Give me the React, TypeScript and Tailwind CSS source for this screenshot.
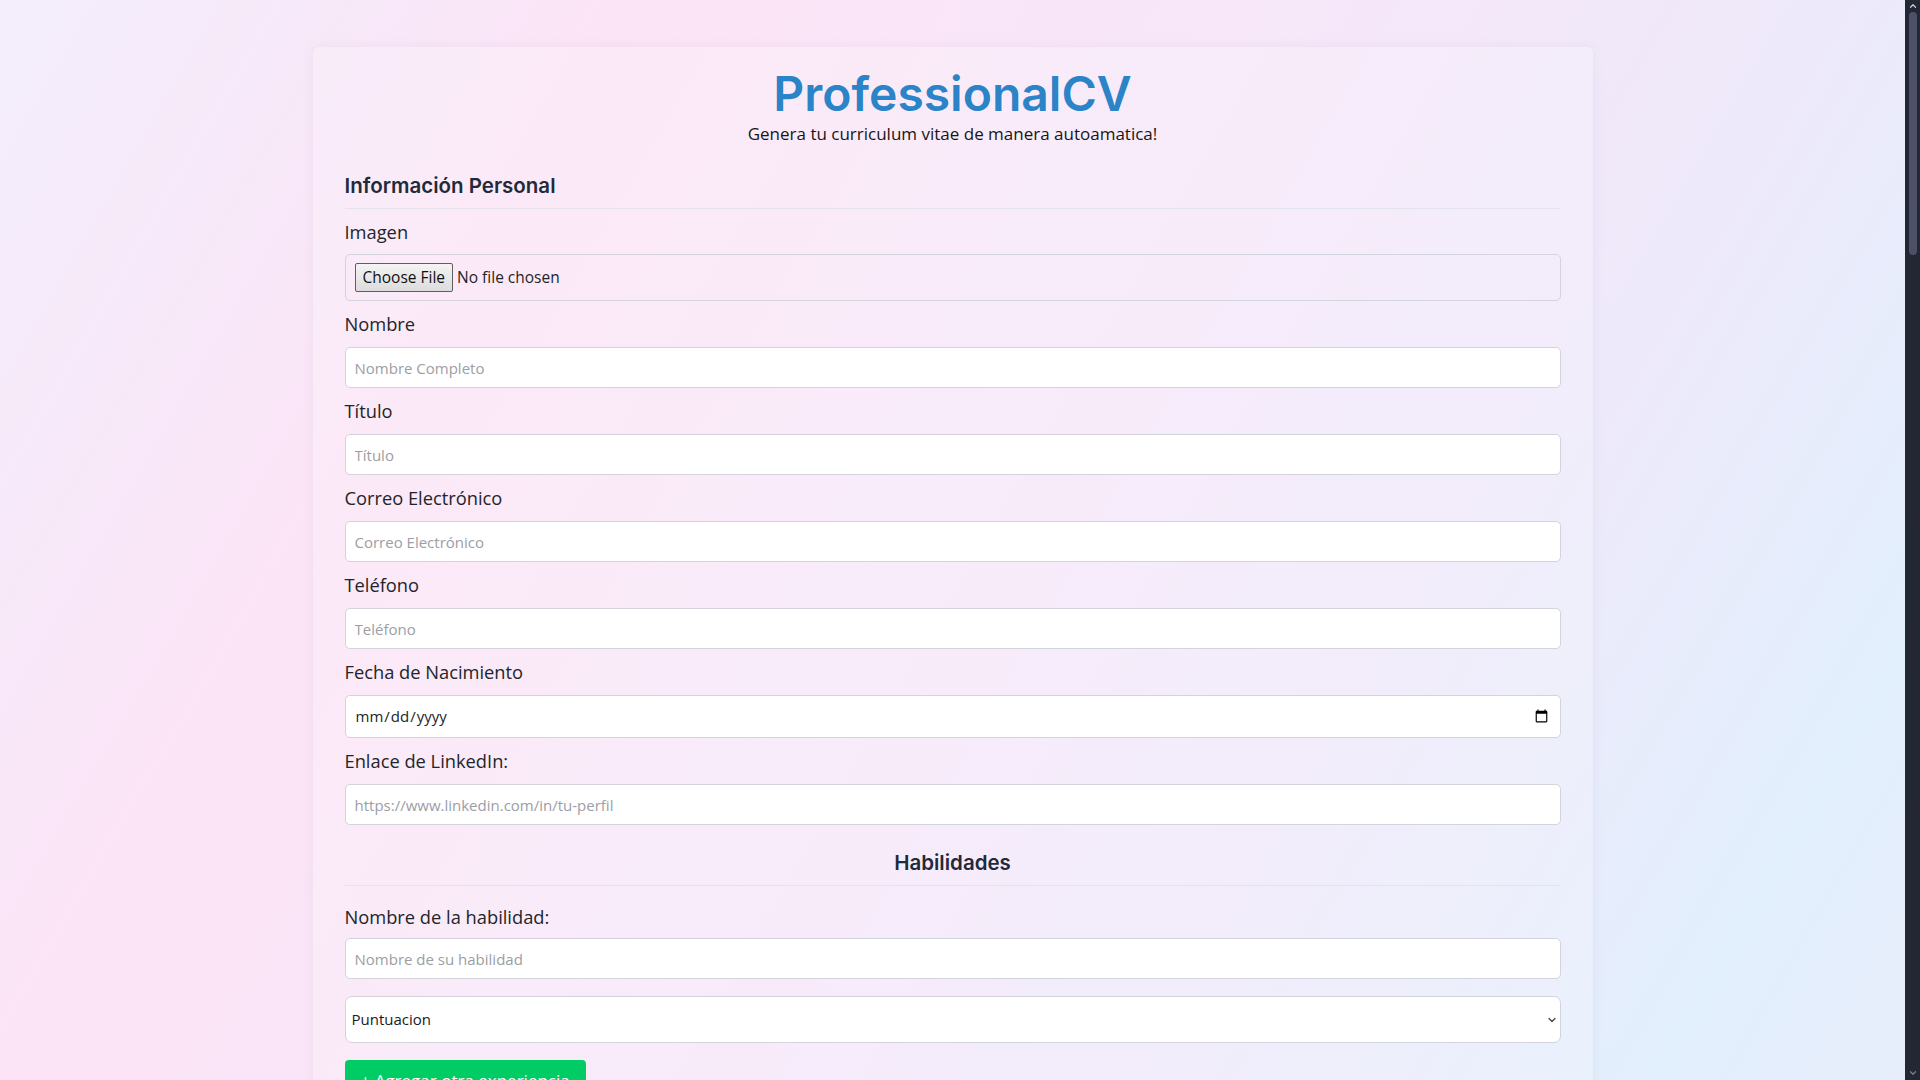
import { ChevronDown, ChevronUp } from "lucide-react";

const personalFields = [
  { id: "nombre", label: "Nombre", placeholder: "Nombre Completo", type: "text" },
  { id: "titulo", label: "Título", placeholder: "Título", type: "text" },
  { id: "correo", label: "Correo Electrónico", placeholder: "Correo Electrónico", type: "email" },
  { id: "telefono", label: "Teléfono", placeholder: "Teléfono", type: "tel" },
];

const labelCls = "block text-[18.3px] leading-[30px] text-[#212529] mb-2";
const inputCls =
  "block w-full h-[41px] rounded-[5px] border border-[#d3d3db] bg-white px-[9px] text-[15px] text-[#212529] placeholder:text-[#9b9ea6] outline-none";

const SectionTitle = ({ children, center }: { children: string; center?: boolean }) => (
  <h2
    className={`font-['Inter',sans-serif] font-semibold text-[20.5px] leading-[26px] text-[#1f2a3a] pb-[9px] border-b border-[#e3e3ea] ${
      center ? "text-center" : ""
    }`}
  >
    {children}
  </h2>
);

// window scrollbar, as it shows in the screenshot
const Scrollbar = () => (
  <aside className="w-[15px] shrink-0 bg-[#232633] flex flex-col items-center">
    <ChevronUp size={10} strokeWidth={3} className="text-[#c9cad3] mt-[1px]" />
    <div className="w-[8px] h-[243px] mt-[1px] rounded-full bg-[#4d5167]" />
    <div className="flex-1" />
    <ChevronDown size={10} strokeWidth={3} className="text-[#7d7f8c] mb-[2px]" />
  </aside>
);

export default function App() {
  return (
    <div className="flex h-screen overflow-hidden font-['Open_Sans',sans-serif]">
      <div className="flex-1 overflow-hidden bg-[linear-gradient(120deg,#f3eefc_0%,#fbe4f6_25%,#f7e7f9_50%,#eee9fa_72%,#e2effd_90%,#e7edfb_100%)]">
        <main className="w-[1280px] mx-auto mt-[47px] mb-10 px-8 pt-[17px] pb-[120px] bg-white/20 shadow-[0_0_12px_rgba(120,100,140,0.08)] rounded-md">
          <header className="text-center">
            <h1 className="font-['Inter',sans-serif] font-semibold text-[48px] leading-[59px] text-[#2b84c7]">
              ProfessionalCV
            </h1>
            <p className="text-[17px] leading-[24px] text-[#161616] -mt-px">
              Genera tu curriculum vitae de manera autoamatica!
            </p>
          </header>

          <section className="mt-[27px]">
            <SectionTitle>Información Personal</SectionTitle>

            <div className="mt-2">
              <label htmlFor="imagen" className={labelCls + " !mb-[7px]"}>
                Imagen
              </label>
              <input
                id="imagen"
                type="file"
                className="block w-full h-[47px] rounded-[5px] border border-[#d3d3db] px-[9px] text-[15.5px] text-[#212529] file:h-[29px] file:mt-[8px] file:mr-[4px] file:px-[7px] file:text-[15.5px] file:text-[#111] file:border file:border-[#5f5f5f] file:rounded-[2px] file:bg-linear-to-b file:from-[#f4f4f4] file:to-[#dcdcdc]"
              />
            </div>

            {personalFields.map((f) => (
              <div key={f.id} className="mt-2">
                <label htmlFor={f.id} className={labelCls}>
                  {f.label}
                </label>
                <input id={f.id} type={f.type} placeholder={f.placeholder} className={inputCls} />
              </div>
            ))}

            <div className="mt-2">
              <label htmlFor="nacimiento" className={labelCls}>
                Fecha de Nacimiento
              </label>
              <input id="nacimiento" type="date" className={inputCls + " !h-[43px]"} />
            </div>

            <div className="mt-2">
              <label htmlFor="linkedin" className={labelCls}>
                Enlace de LinkedIn:
              </label>
              <input
                id="linkedin"
                type="url"
                placeholder="https://www.linkedin.com/in/tu-perfil"
                className={inputCls}
              />
            </div>
          </section>

          <section className="mt-[25px]">
            <SectionTitle center>Habilidades</SectionTitle>

            <label htmlFor="habilidad" className={labelCls + " mt-4 !mb-[6px]"}>
              Nombre de la habilidad:
            </label>
            <input id="habilidad" type="text" placeholder="Nombre de su habilidad" className={inputCls} />

            <div className="relative mt-[17px]">
              <select
                defaultValue=""
                className="block w-full h-[47px] appearance-none rounded-[7px] border border-[#d3d3db] bg-white px-[6px] text-[15px] text-[#1a1a1a] outline-none"
              >
                <option value="">Puntuacion</option>
                <option value="1">1</option>
                <option value="2">2</option>
                <option value="3">3</option>
                <option value="4">4</option>
                <option value="5">5</option>
              </select>
              <ChevronDown
                size={12}
                strokeWidth={2.5}
                className="absolute right-[3px] top-1/2 -translate-y-1/2 text-[#444] pointer-events-none"
              />
            </div>

            <button
              type="button"
              className="mt-[17px] h-[42px] px-4 rounded-[4px] bg-[#00cc66] text-white text-[17px]"
            >
              + Agregar otra experiencia
            </button>
          </section>
        </main>
      </div>
      <Scrollbar />
    </div>
  );
}
